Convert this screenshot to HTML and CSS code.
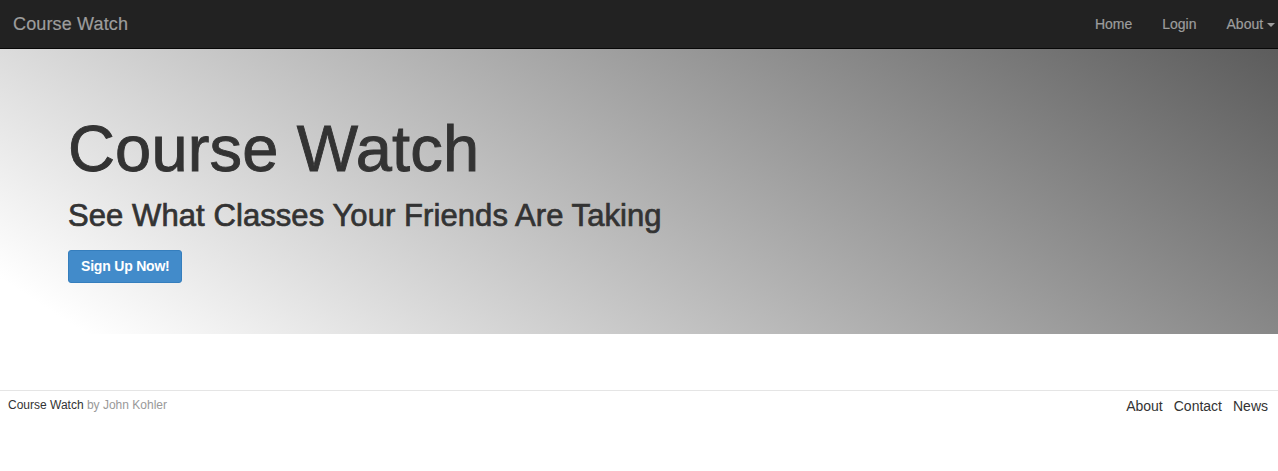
FILE: index.html
```html
<!DOCTYPE html>
<html>
<head>
<meta charset="utf-8">
<title>Course Watch</title>
<link rel="stylesheet" href="styles.css">
</head>
<body>
<header class="navbar">
  <a class="brand" href="#">Course Watch</a>
  <ul class="nav">
    <li><a href="#">Home</a></li>
    <li><a href="#">Login</a></li>
    <li><a href="#">About <span class="caret"></span></a></li>
  </ul>
</header>
<section class="jumbotron">
  <div class="container">
    <h1>Course Watch</h1>
    <h2>See What Classes Your Friends Are Taking</h2>
    <a class="btn" href="#">Sign Up Now!</a>
  </div>
</section>
<footer class="footer">
  <div class="credit"><span class="name">Course Watch</span> <span class="by">by John Kohler</span></div>
  <ul class="footer-links">
    <li><a href="#">About</a></li>
    <li><a href="#">Contact</a></li>
    <li><a href="#">News</a></li>
  </ul>
</footer>
</body>
</html>
```
FILE: styles.css
```css
* { box-sizing: border-box; }
html, body { overflow: hidden; }
body {
  margin: 0;
  font-family: "Liberation Sans", Arial, Helvetica, sans-serif;
  font-size: 14px;
  line-height: 1.428;
  color: #333;
  background: #fff;
}
a { text-decoration: none; }
ul { list-style: none; margin: 0; padding: 0; }

.navbar {
  height: 49px;
  background: #222;
  border-bottom: 1px solid #080808;
  display: flex;
  align-items: center;
  justify-content: space-between;
  padding-left: 13px;
}
.brand {
  color: #9d9d9d;
  font-size: 18px;
  line-height: 20px;
  letter-spacing: 0.15px;
  -webkit-text-stroke: 0.2px #9d9d9d;
}
.nav {
  display: flex;
  margin-right: -12px;
}
.nav a {
  display: block;
  color: #9d9d9d;
  padding: 0 15px;
  line-height: 20px;
  -webkit-text-stroke: 0.2px #9d9d9d;
}
.caret {
  display: inline-block;
  width: 0;
  height: 0;
  vertical-align: middle;
  border-top: 4px solid #9d9d9d;
  border-left: 4px solid transparent;
  border-right: 4px solid transparent;
}

.jumbotron {
  height: 285px;
  background: linear-gradient(33deg, #ffffff 5%, #5c5c5c 100%);
  padding-top: 64px;
}
.container {
  max-width: 1170px;
  margin: 0 auto;
  padding: 0 14px;
}
h1 {
  margin: 0;
  font-size: 65px;
  font-weight: normal;
  line-height: 72px;
  color: #333;
  letter-spacing: 0.15px;
  -webkit-text-stroke: 0.9px #333;
}
h2 {
  margin: 14px 0 0;
  font-size: 31px;
  font-weight: normal;
  line-height: 34px;
  color: #333;
  letter-spacing: 0.08px;
  -webkit-text-stroke: 0.7px #333;
}
.btn {
  display: inline-block;
  margin-top: 17px;
  background: #428bca;
  border: 1px solid #357ebd;
  border-radius: 3px;
  color: #fff;
  font-weight: bold;
  font-size: 14px;
  line-height: 19px;
  padding: 6px 11px 6px 12px;
  letter-spacing: -0.2px;
}

.footer {
  margin-top: 56px;
  border-top: 1px solid #e5e5e5;
  display: flex;
  justify-content: space-between;
  align-items: flex-start;
  padding: 6px 10px 0 8px;
}
.credit { font-size: 12px; line-height: 16px; }
.credit .name { color: #333; }
.credit .by { color: #999; }
.footer-links { display: flex; gap: 11px; margin-top: -1px; }
.footer-links a { color: #333; font-size: 14px; line-height: 20px; }
```
